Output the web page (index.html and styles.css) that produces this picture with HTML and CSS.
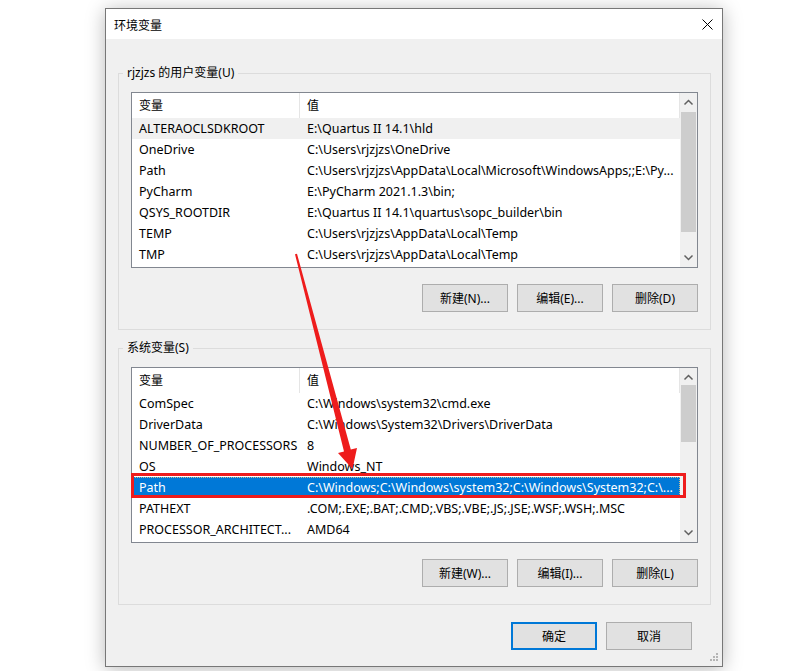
FILE: index.html
```html
<!doctype html>
<html lang="zh-CN">
 <head>
  <meta charset="UTF-8">
  <title>环境变量</title>
  <link rel="stylesheet" href="styles.css">
 </head>
 <body>

	<div class="window">
		<!-- 标题栏 -->
		<div class="titlebar">
			<span class="title">环境变量</span>
			<svg class="close" width="11" height="11" viewBox="0 0 11 11">
				<path d="M0.5 0.5 L10.5 10.5 M10.5 0.5 L0.5 10.5" stroke="#000" stroke-width="1" fill="none"/>
			</svg>
		</div>

		<div class="content">
			<!-- 用户变量 -->
			<fieldset class="group">
				<legend>rjzjzs 的用户变量(U)</legend>
				<div class="listview">
					<div class="lv-body">
						<div class="lv-head"><div class="c1">变量</div><div class="c2">值</div></div>
						<div class="row hover"><div class="c1">ALTERAOCLSDKROOT</div><div class="c2">E:\Quartus II 14.1\hld</div></div>
						<div class="row"><div class="c1">OneDrive</div><div class="c2">C:\Users\rjzjzs\OneDrive</div></div>
						<div class="row"><div class="c1">Path</div><div class="c2">C:\Users\rjzjzs\AppData\Local\Microsoft\WindowsApps;;E:\Py...</div></div>
						<div class="row"><div class="c1">PyCharm</div><div class="c2">E:\PyCharm 2021.1.3\bin;</div></div>
						<div class="row"><div class="c1">QSYS_ROOTDIR</div><div class="c2">E:\Quartus II 14.1\quartus\sopc_builder\bin</div></div>
						<div class="row"><div class="c1">TEMP</div><div class="c2">C:\Users\rjzjzs\AppData\Local\Temp</div></div>
						<div class="row"><div class="c1">TMP</div><div class="c2">C:\Users\rjzjzs\AppData\Local\Temp</div></div>
					</div>
					<div class="vscroll">
						<div class="arr"><svg width="17" height="17"><path d="M4.5 11.5 L8.5 7.5 L12.5 11.5" stroke="#606060" stroke-width="1.5" fill="none"/></svg></div>
						<div class="track"><div class="thumb" style="height:120px; margin-top:2px;"></div></div>
						<div class="arr"><svg width="17" height="17"><path d="M4.5 5.5 L8.5 9.5 L12.5 5.5" stroke="#606060" stroke-width="1.5" fill="none"/></svg></div>
					</div>
				</div>
				<div class="btns">
					<button class="btn">新建(N)...</button>
					<button class="btn">编辑(E)...</button>
					<button class="btn">删除(D)</button>
				</div>
			</fieldset>

			<!-- 系统变量 -->
			<fieldset class="group sys">
				<legend>系统变量(S)</legend>
				<div class="listview">
					<div class="lv-body">
						<div class="lv-head"><div class="c1">变量</div><div class="c2">值</div></div>
						<div class="row"><div class="c1">ComSpec</div><div class="c2">C:\Windows\system32\cmd.exe</div></div>
						<div class="row"><div class="c1">DriverData</div><div class="c2">C:\Windows\System32\Drivers\DriverData</div></div>
						<div class="row"><div class="c1">NUMBER_OF_PROCESSORS</div><div class="c2">8</div></div>
						<div class="row"><div class="c1">OS</div><div class="c2">Windows_NT</div></div>
						<div class="row sel"><div class="c1">Path</div><div class="c2">C:\Windows;C:\Windows\system32;C:\Windows\System32;C:\...</div></div>
						<div class="row"><div class="c1">PATHEXT</div><div class="c2">.COM;.EXE;.BAT;.CMD;.VBS;.VBE;.JS;.JSE;.WSF;.WSH;.MSC</div></div>
						<div class="row"><div class="c1">PROCESSOR_ARCHITECT...</div><div class="c2">AMD64</div></div>
					</div>
					<div class="vscroll">
						<div class="arr"><svg width="17" height="17"><path d="M4.5 11.5 L8.5 7.5 L12.5 11.5" stroke="#606060" stroke-width="1.5" fill="none"/></svg></div>
						<div class="track"><div class="thumb" style="height:57px;"></div></div>
						<div class="arr"><svg width="17" height="17"><path d="M4.5 5.5 L8.5 9.5 L12.5 5.5" stroke="#606060" stroke-width="1.5" fill="none"/></svg></div>
					</div>
				</div>
				<div class="btns">
					<button class="btn">新建(W)...</button>
					<button class="btn">编辑(I)...</button>
					<button class="btn">删除(L)</button>
				</div>
			</fieldset>

			<!-- 确定 / 取消 -->
			<div class="footer">
				<button class="btn ok">确定</button>
				<button class="btn">取消</button>
			</div>
		</div>

		<svg class="grip" width="12" height="12" viewBox="0 0 12 12">
			<rect x="9" y="1" width="2" height="2" fill="#b4b4b4"/>
			<rect x="6" y="4" width="2" height="2" fill="#b4b4b4"/>
			<rect x="9" y="4" width="2" height="2" fill="#b4b4b4"/>
			<rect x="3" y="7" width="2" height="2" fill="#b4b4b4"/>
			<rect x="6" y="7" width="2" height="2" fill="#b4b4b4"/>
			<rect x="9" y="7" width="2" height="2" fill="#b4b4b4"/>
		</svg>
	</div>

	<!-- 标注: 红框 + 箭头 -->
	<svg class="annot" width="808" height="671" viewBox="0 0 808 671">
		<rect x="132.5" y="474.5" width="552" height="22" fill="none" stroke="#ee1c1c" stroke-width="3"/>
		<polygon points="295,254.3 297,253.8 350.8,449.6 357,448 352.5,469 338,453 344,451.5" fill="#ee1c1c"/>
	</svg>

 </body>
</html>
```

FILE: styles.css
```css
/* 기본 */
html, body {
margin: 0;
padding: 0;
}

body {
width: 808px;
height: 671px;
overflow: hidden;
background: #fff;
position: relative;
font-family: "Noto Sans", "Noto Sans CJK SC", sans-serif;
font-size: 12px;
color: #000;
}

/* 창 */
.window {
position: relative;
box-sizing: border-box;
width: 618px;
height: 659px;
margin: 8px 0 0 105px;
border: 1px solid #777;
background: #f0f0f0;
box-shadow: 0 2px 18px rgba(0, 0, 0, 0.28);
}

.titlebar {
height: 30px;
background: #fff;
display: flex;
align-items: center;
padding-left: 8px;
}

.title {
flex: 1;
padding-top: 2px;
}

.close {
margin-right: 9px;
}

.content {
padding: 0 11px 0 12px;
}

/* 그룹 박스 */
.group {
margin: 26px 0 0 0;
padding: 11px 12px 17px 12px;
border: 1px solid #dcdcdc;
min-width: 0;
}

.group.sys {
margin-top: 10px;
}

.group legend {
margin-left: -8px;
padding: 0 4px;
line-height: 16px;
}

/* 목록 */
.listview {
box-sizing: border-box;
height: 176px;
border: 1px solid #828790;
background: #fff;
display: flex;
}

.lv-body {
flex: 1;
overflow: hidden;
}

.lv-head {
display: flex;
height: 25px;
line-height: 26px;
}

.lv-head .c1 {
border-right: 1px solid #e5e5e5;
}

.lv-head .c2 {
border-right: 1px solid #e5e5e5;
}

.row {
display: flex;
height: 21px;
line-height: 21px;
font-size: 12.5px;
white-space: nowrap;
}

.c1 {
box-sizing: border-box;
width: 168px;
padding-left: 7px;
overflow: hidden;
}

.c2 {
flex: 1;
padding-left: 7px;
overflow: hidden;
}

.row.hover {
background: #f0f0f0;
}

.row.sel {
background: #0078d7;
color: #fff;
outline: 1px dotted rgba(255, 200, 120, 0.8);
outline-offset: -1px;
}

/* 스크롤바 */
.vscroll {
width: 17px;
background: #f0f0f0;
display: flex;
flex-direction: column;
}

.arr {
height: 17px;
}

.arr svg {
display: block;
}

.track {
flex: 1;
}

.thumb {
margin: 0 1px;
background: #cdcdcd;
}

/* 버튼 */
.btns {
display: flex;
justify-content: flex-end;
gap: 9px;
margin-top: 16px;
}

.btn {
box-sizing: border-box;
width: 86px;
height: 28px;
padding: 0;
border: 1px solid #adadad;
background: #e1e1e1;
font-family: "Noto Sans", "Noto Sans CJK SC", sans-serif;
font-size: 12px;
color: #000;
}

.btn.ok {
border: 2px solid #0078d7;
}

.footer {
display: flex;
justify-content: flex-end;
gap: 9px;
margin-top: 17px;
padding-right: 19px;
}

.grip {
position: absolute;
right: 3px;
bottom: 2px;
}

/* 주석 레이어 */
.annot {
position: absolute;
left: 0;
top: 0;
pointer-events: none;
}
```
